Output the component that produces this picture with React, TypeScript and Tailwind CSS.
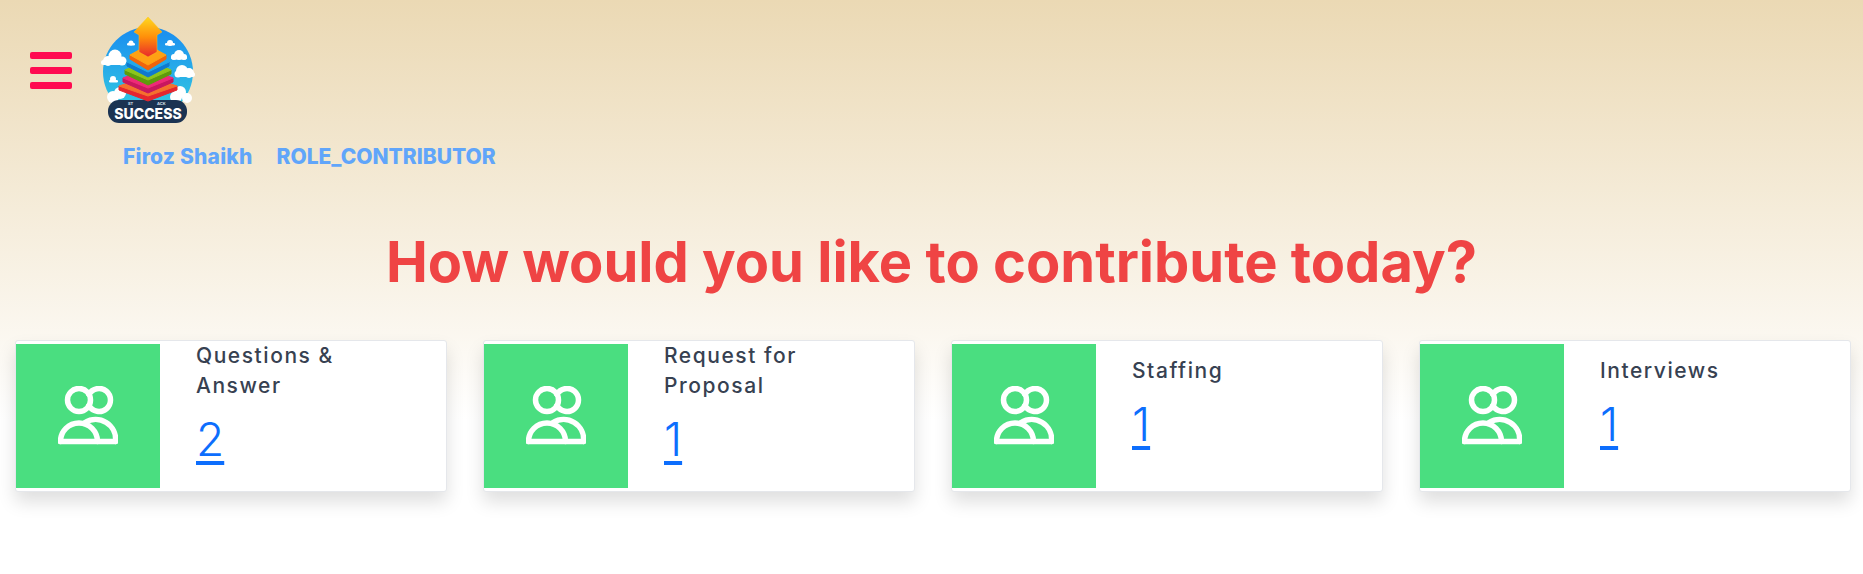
const F = "[font-family:Inter,'Noto_Sans',sans-serif]";

function Layer({ w, y, top, side }: { w: number; y: number; top: string; side: string }) {
  const c = 148;
  return (
    <g strokeLinejoin="round">
      <polygon points={`${c - w},${y} ${c},${y + 10} ${c + w},${y} ${c + w},${y + 4} ${c},${y + 15} ${c - w},${y + 4}`} fill={side} stroke={side} strokeWidth="1" />
      <polygon points={`${c - w},${y} ${c},${y - 10} ${c + w},${y} ${c},${y + 10}`} fill={top} stroke={top} strokeWidth="1" />
    </g>
  );
}

function Logo() {
  return (
    <svg width="100" height="120" viewBox="100 10 100 120" className="block">
      <defs>
        <linearGradient id="sky" x1="0" y1="0" x2="0" y2="1">
          <stop offset="0" stopColor="#1a8cf0" />
          <stop offset="1" stopColor="#35cfe0" />
        </linearGradient>
        <linearGradient id="arrow" x1="0" y1="0" x2="0" y2="1">
          <stop offset="0" stopColor="#ffd91f" />
          <stop offset="0.5" stopColor="#ff8f0a" />
          <stop offset="1" stopColor="#e8282c" />
        </linearGradient>
      </defs>
      <circle cx="148" cy="72" r="45" fill="url(#sky)" />
      <g fill="#fff">
        <circle cx="108" cy="61" r="5" /><circle cx="115" cy="56" r="6.5" /><circle cx="122" cy="61" r="4.5" />
        <rect x="101" y="60" width="24" height="5" rx="2.5" />
        <circle cx="182" cy="71" r="6" /><circle cx="189" cy="73" r="5" /><circle cx="178" cy="74" r="3.5" />
        <rect x="176" y="72" width="19" height="5" rx="2.5" />
        <circle cx="179" cy="55" r="5" /><circle cx="174" cy="57" r="3" /><circle cx="184" cy="57" r="3" />
        <rect x="171" y="56" width="16" height="3.5" rx="1.7" />
        <circle cx="170" cy="43" r="3" /><rect x="165" y="43" width="10" height="2.5" rx="1.2" />
        <circle cx="131" cy="43" r="2.5" /><rect x="127" y="43" width="8" height="2.5" rx="1.2" />
        <circle cx="113" cy="79" r="3" /><rect x="109" y="80" width="9" height="2.5" rx="1.2" />
        <circle cx="113" cy="97" r="6" /><circle cx="120" cy="93" r="6" />
        <circle cx="180" cy="92" r="6" /><circle cx="187" cy="98" r="5" /><circle cx="176" cy="97" r="6" />
      </g>
      <path d="M120 100 h56 a11 11 0 0 1 11 11 v1 a11 11 0 0 1 -11 11 h-57 a11 11 0 0 1 -11 -11 v-1 a11 11 0 0 1 11 -11z" fill="#1b3352" />
      <text x="128" y="105" fontSize="4" fill="#d8e0ea" fontWeight="700" fontFamily="Inter, sans-serif">ST</text>
      <text x="157" y="105" fontSize="4" fill="#d8e0ea" fontWeight="700" fontFamily="Inter, sans-serif">ACK</text>
      <text x="148" y="118.5" fontSize="14" fill="#fff" fontWeight="800" textAnchor="middle" fontFamily="Inter, sans-serif">SUCCESS</text>
      <Layer w={29} y={86} top="#f5702e" side="#e5262f" />
      <Layer w={25} y={78} top="#ee2a78" side="#c8175f" />
      <Layer w={23} y={70} top="#8cc51c" side="#5e9a0c" />
      <Layer w={21} y={62} top="#22a8ea" side="#0f79cf" />
      <Layer w={18} y={55} top="#ffa114" side="#f0640c" />
      <polygon points="148,17 162,32 157,35 157,52 148,57 139,52 139,35 134,32" fill="url(#arrow)" stroke="#ffc21a" strokeWidth="0.5" strokeLinejoin="round" />
    </svg>
  );
}

function People() {
  return (
    <svg width="60" height="60" viewBox="0 0 60 60" fill="none" stroke="#fff" strokeWidth="5.5" strokeLinecap="round" strokeLinejoin="round">
      <circle cx="21" cy="14" r="11.5" />
      <path d="M31 8.3A11.5 11.5 0 1 1 31 19.7" />
      <path d="M2.5 55.5a18.5 18.5 0 0 1 37 0" />
      <path d="M27 36.5a20 20 0 0 1 30.5 19" />
      <path d="M2.5 55.5h55" />
    </svg>
  );
}

function Card({ title, count }: { title: string; count: string }) {
  return (
    <div className="flex h-[152px] rounded-[3px] border border-gray-200 bg-white py-[3px] shadow-[0_10px_18px_rgba(0,0,0,0.13)]">
      <div className="flex w-[144px] shrink-0 items-center justify-center bg-[#4ade80]">
        <People />
      </div>
      <div className="flex flex-col justify-center pb-[24px] pl-[36px]">
        <div className={`w-[200px] text-[21px] leading-[30px] font-medium tracking-[1.55px] text-[#374151] ${F}`}>{title}</div>
        <a href="#" className={`mt-[10px] text-[46px] leading-[56px] font-light text-[#0d6efd] underline decoration-[4px] underline-offset-[5px] ${F}`}>{count}</a>
      </div>
    </div>
  );
}

export default function App() {
  return (
    <div className="h-[574px] overflow-hidden bg-white">
      <div className="h-[420px] bg-gradient-to-b from-[#ebd9b4] to-white">
        <div className="flex pt-[10px] pl-[30px]">
          <div className="mt-[42px] flex h-[37px] w-[42px] flex-col justify-between">
            <div className="h-[7px] rounded-[2px] bg-[#ff0a50]" />
            <div className="h-[7px] rounded-[2px] bg-[#ff0a50]" />
            <div className="h-[7px] rounded-[2px] bg-[#ff0a50]" />
          </div>
          <div className="ml-[28px]"><Logo /></div>
        </div>
        <div className={`mt-[12px] flex gap-[24px] pl-[123px] text-[21px] leading-[30px] font-extrabold text-[#60a5fa] ${F}`}>
          <span className="tracking-[0.2px]">Firoz Shaikh</span>
          <span>ROLE_CONTRIBUTOR</span>
        </div>
        <h1 className={`mt-[55px] text-center text-[56px] leading-[70px] font-bold text-[#ef4444] ${F}`}>
          How would you like to contribute today?
        </h1>
      </div>
      <div className="-mt-[80px] grid grid-cols-4 gap-[36px] pr-[12px] pl-[15px]">
        <Card title="Questions & Answer" count="2" />
        <Card title="Request for Proposal" count="1" />
        <Card title="Staffing" count="1" />
        <Card title="Interviews" count="1" />
      </div>
    </div>
  );
}
